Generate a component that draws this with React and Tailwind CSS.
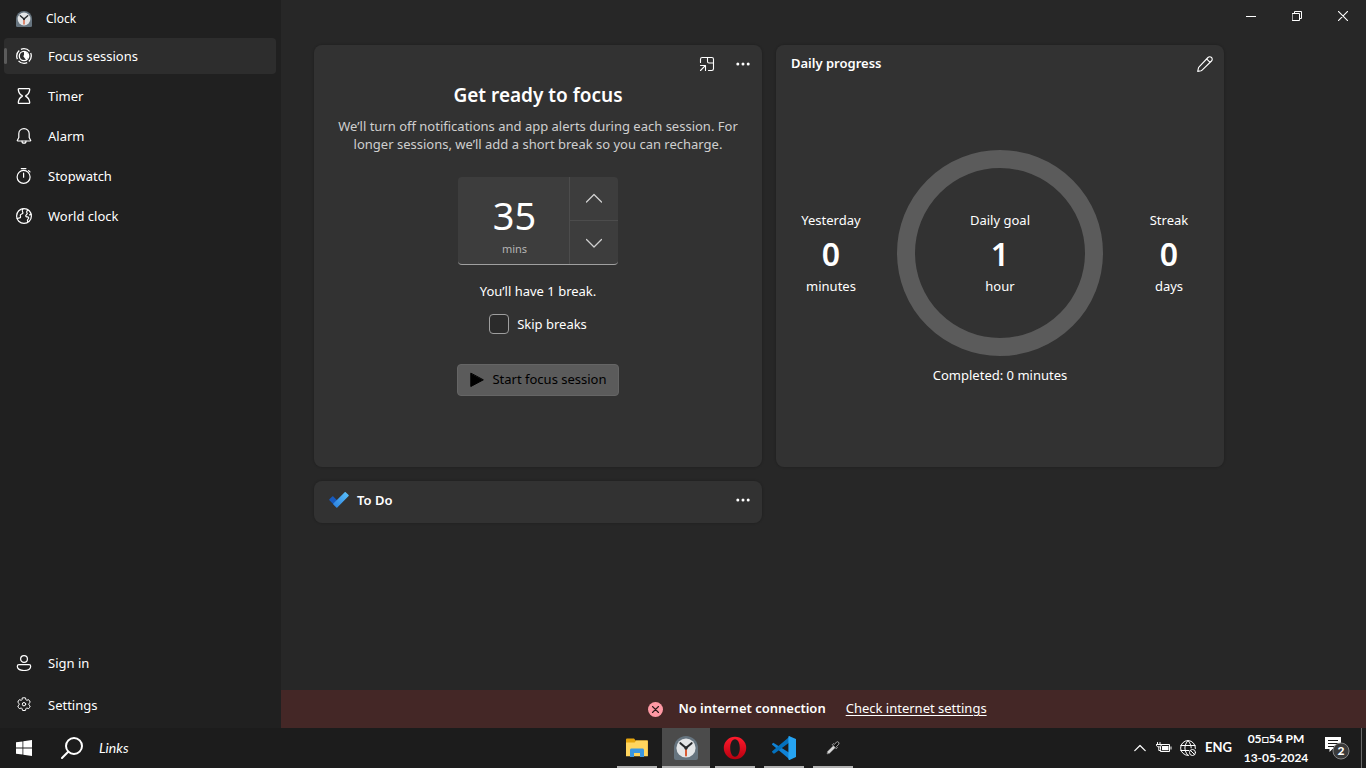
import React, { useState } from "react";

function Svg({ size = 16, box = 16, stroke = 1.1, children, className = "" }) {
  return (
    <svg
      width={size}
      height={size}
      viewBox={`0 0 ${box} ${box}`}
      fill="none"
      stroke="currentColor"
      strokeWidth={stroke}
      strokeLinecap="round"
      strokeLinejoin="round"
      aria-hidden="true"
      className={`shrink-0 ${className}`}
    >
      {children}
    </svg>
  );
}

function ClockLogo({ size }) {
  return (
    <Svg size={size} box={24} stroke={0}>
      <path d="M12 0a12 12 0 0 1 12 12v10a2 2 0 0 1-2 2H2a2 2 0 0 1-2-2V12A12 12 0 0 1 12 0z" fill="#66747f" />
      <circle cx="12" cy="12" r="9.6" fill="#e3e5e7" />
      <path d="M12 12v7.5" stroke="#d8532c" strokeWidth="1.9" />
      <path d="M6.4 7.2L12 12l5.6-4.8" stroke="#26292c" strokeWidth="2.1" />
      <circle cx="12" cy="12" r="1.7" fill="#26292c" />
    </Svg>
  );
}

const FocusIcon = () => (
  <Svg box={16} stroke={1.3}>
    <circle cx="8" cy="8" r="7.3" strokeDasharray="9.5 1.97" strokeLinecap="butt" strokeDashoffset="3.4" />
    <circle cx="8" cy="8" r="4.7" />
    <path d="M8 3.600a4.400 4.400 0 0 1 2.600 7.900L8 8z" fill="currentColor" stroke="none" />
    <path d="M8 8l2.600 3.500" />
  </Svg>
);
const TimerIcon = () => (
  <Svg stroke={1.3}>
    <path d="M3 .7h10c.5 0 .8.4.7.9-.3 3-1.500 4.900-3.900 6.100-.3.2-.3.500 0 .6 2.400 1.200 3.600 3.100 3.900 6.100 0 .5-.2.900-.7.900H3c-.5 0-.8-.4-.7-.9.3-3 1.500-4.900 3.900-6.100.3-.1.300-.4 0-.6C3.800 6.500 2.600 4.600 2.300 1.600c-.1-.5.2-.9.700-.9z" />
  </Svg>
);
const BellIcon = () => (
  <Svg stroke={1.2}>
    <path d="M8 .6c-3 0-5.200 2.300-5.200 5.200v3.600l-1.500 3c-.1.300 0 .6.400.6h12.600c.4 0 .5-.3.400-.6l-1.500-3V5.800C13.200 2.900 11 .6 8 .6z" />
    <path d="M6 13.200a2 2 0 0 0 4 0" />
  </Svg>
);
const StopwatchIcon = () => (
  <Svg stroke={1.2}>
    <circle cx="7.600" cy="8.900" r="6.500" />
    <path d="M7.600 5.200v4M5.300.6h4.600M12.600 2.600l1.400 1.300" />
  </Svg>
);
const WorldIcon = () => (
  <Svg stroke={1.2}>
    <circle cx="8" cy="8" r="7.400" />
    <path d="M1.200 10.500l2.400-.6c.8-.2 1.100-.7.900-1.400l-.2-1c-.1-.7.300-1.100.9-1.300l1-.4c.6-.2.800-.7.600-1.300L6.300 2.900c-.1-.7.100-1.300.6-1.900" />
    <path d="M11.800 1.900l-.9 1.300c-.4.600-.3 1.100.1 1.600.6.700.2 1.400-.6 1.900-.9.600-.8 1.500-.1 2 .7.400 1.700-.1 2.300.6.600.7-.2 1.500-.8 2.100-.5.600-.5 1.500-.1 2.400M15.100 6.400l-1.600.5" />
  </Svg>
);
const PersonIcon = () => (
  <Svg stroke={1.2}>
    <circle cx="8" cy="4" r="3.400" />
    <path d="M3 9.600h10c1 0 1.700.7 1.700 1.600 0 2.600-2.700 4.300-6.700 4.300s-6.700-1.700-6.700-4.300c0-.9.700-1.600 1.700-1.600z" />
  </Svg>
);
const GearIcon = () => (
  <Svg stroke={1}>
    <path d="M6.500.9c1-.2 2-.2 3 0l.4 1.700c.1.500.600.8 1.100.6l1.700-.5c.7.700 1.200 1.600 1.500 2.600l-1.300 1.200c-.4.400-.4.900 0 1.300l1.300 1.200c-.3 1-.8 1.800-1.500 2.600l-1.700-.5c-.5-.1-1 .1-1.100.6l-.4 1.700c-1 .2-2 .2-3 0l-.4-1.700c-.1-.5-.6-.8-1.100-.6l-1.700.5C2.600 10.800 2.100 10 1.800 9l1.300-1.200c.4-.4.4-.9 0-1.300L1.800 5.300c.3-1 .8-1.900 1.500-2.600L5 3.200c.5.200 1-.1 1.100-.6z" />
    <circle cx="8" cy="7.200" r="1.700" />
  </Svg>
);

function Dots() {
  return (
    <Svg size={14} box={14} stroke={0}>
      <circle cx="1.800" cy="7" r="1.500" fill="currentColor" />
      <circle cx="7" cy="7" r="1.500" fill="currentColor" />
      <circle cx="12.200" cy="7" r="1.500" fill="currentColor" />
    </Svg>
  );
}

function NavItem({ icon, label, active }) {
  return (
    <a
      href="#"
      aria-current={active ? "page" : undefined}
      className={`flex h-9 items-center rounded ${active ? "bg-[#2d2d2d]" : ""}`}
    >
      <span className={`h-4 w-[3px] rounded-full ${active ? "bg-[#5b5b5b]" : ""}`} />
      <span className="ml-[9px] mr-4">{icon}</span>
      <span className="pt-px">{label}</span>
    </a>
  );
}

function Sidebar() {
  return (
    <aside className="flex w-[281px] shrink-0 flex-col bg-[#202020] px-1">
      <div className="flex h-[38px] items-center gap-[14px] pl-3 text-xs">
        <ClockLogo size={16} />
        <span>Clock</span>
      </div>
      <nav className="mr-px flex flex-1 flex-col gap-1">
        <NavItem icon={<FocusIcon />} label="Focus sessions" active />
        <NavItem icon={<TimerIcon />} label="Timer" />
        <NavItem icon={<BellIcon />} label="Alarm" />
        <NavItem icon={<StopwatchIcon />} label="Stopwatch" />
        <NavItem icon={<WorldIcon />} label="World clock" />
      </nav>
      <nav className="mr-px flex flex-col gap-[6px] pb-[5px]">
        <NavItem icon={<PersonIcon />} label="Sign in" />
        <NavItem icon={<GearIcon />} label="Settings" />
      </nav>
    </aside>
  );
}

function WindowControls() {
  const button = "flex h-8 w-[46px] items-center justify-center";
  return (
    <div className="flex justify-end">
      <button aria-label="Minimize" className={button}>
        <Svg size={10} box={10} stroke={1}><path d="M0 5.500h10" strokeLinecap="butt" /></Svg>
      </button>
      <button aria-label="Restore" className={button}>
        <Svg size={10} box={10} stroke={1}>
          <path d="M.5 2.500h7v7h-7zM2.500 2.500v-2h7v7h-2" strokeLinejoin="miter" />
        </Svg>
      </button>
      <button aria-label="Close" className={button}>
        <Svg size={10} box={10} stroke={1.1}><path d="M.3.3l9.400 9.400M9.700.3L.3 9.700" /></Svg>
      </button>
    </div>
  );
}

const card = "rounded-lg bg-[#323232] shadow-[0_0_2px_1px_rgba(0,0,0,0.12)]";

function FocusCard() {
  const [minutes, setMinutes] = useState(35);
  return (
    <section className={`${card} flex min-h-[422px] flex-col items-center`}>
      <div className="flex h-[38px] w-full items-center justify-end gap-5 pr-[11px]">
        <button aria-label="Keep on top">
          <Svg box={16} stroke={1.1}>
            <path d="M1.500 6.500V3.200C1.500 2 2.300 1.500 3.200 1.500h9.600c1 0 1.700.7 1.700 1.700v9.600c0 1-.7 1.700-1.700 1.700H9.500" />
            <path d="M8.500 1.500v4c0 1 .5 1.500 1.500 1.500h4.500M1.500 9.500h5v5M6.300 9.700l-4.800 4.800" />
          </Svg>
        </button>
        <button aria-label="More options" className="px-px"><Dots /></button>
      </div>
      <h1 className="text-[19px] font-semibold leading-6">Get ready to focus</h1>
      <p className="mt-[10px] max-w-[416px] text-center leading-[18px] text-[#cfcfcf]">
        We’ll turn off notifications and app alerts during each session. For longer sessions, we’ll
        add a short break so you can recharge.
      </p>
      <div className="mt-6 flex h-[88px] w-40 overflow-hidden rounded border-b border-[#a0a0a0] bg-[#3d3d3d]">
        <div className="flex flex-1 flex-col items-center pt-[14px]">
          <input
            id="minutes"
            value={minutes}
            onChange={(e) => setMinutes(Number(e.target.value) || 0)}
            className="h-12 w-full bg-transparent pl-0.5 text-center text-[38px] leading-[48px] outline-none"
          />
          <label htmlFor="minutes" className="pt-0.5 pl-0.5 text-[11px] leading-4 text-[#b4b4b4]">mins</label>
        </div>
        <div className="flex w-[49px] flex-col border-l border-[#4c4c4c] text-[#d0d0d0]">
          <button
            aria-label="Increase"
            onClick={() => setMinutes(minutes + 5)}
            className="flex flex-1 items-center justify-center border-b border-[#4c4c4c]"
          >
            <Svg stroke={1.3}><path d="M.5 11L8 3.500l7.500 7.500" /></Svg>
          </button>
          <button
            aria-label="Decrease"
            onClick={() => setMinutes(Math.max(5, minutes - 5))}
            className="flex flex-1 items-center justify-center"
          >
            <Svg stroke={1.3}><path d="M.5 4.500L8 12l7.500-7.500" /></Svg>
          </button>
        </div>
      </div>
      <p className="mt-4 leading-5">You’ll have 1 break.</p>
      <label className="mt-[13px] flex items-center gap-2 leading-5">
        <input
          type="checkbox"
          className="h-5 w-5 appearance-none rounded border border-[#9e9e9e] bg-[#2b2b2b] checked:bg-[#8a8a8a]"
        />
        Skip breaks
      </label>
      <button className="mt-[30px] flex h-8 items-center gap-[7px] rounded border border-[#656565] bg-[#5b5b5b] px-[11px] text-black">
        <Svg stroke={1}><path d="M1.800 1.500v13L14 8z" fill="currentColor" /></Svg>
        Start focus session
      </button>
    </section>
  );
}

function Stat({ label, value, unit }) {
  return (
    <div className="flex flex-col items-center leading-5">
      <span>{label}</span>
      <span className="mt-1 mb-0.5 text-[32px] font-semibold leading-10">{value}</span>
      <span>{unit}</span>
    </div>
  );
}

function ProgressCard() {
  return (
    <section className={`${card} flex min-h-[422px] flex-col`}>
      <div className="flex h-[38px] items-center justify-between pl-[15px] pr-[11px]">
        <h2 className="font-semibold">Daily progress</h2>
        <button aria-label="Edit daily goal">
          <Svg stroke={1.1}>
            <path d="M11 1.500a2.450 2.450 0 0 1 3.500 3.500L5.100 14.100c-.3.300-.6.500-1 .6L.7 15.400l.8-3.500c.1-.4.300-.7.600-1zM9.600 2.900l3.500 3.500" />
          </Svg>
        </button>
      </div>
      <div className="mt-[67px] grid grid-cols-[110px_1fr_110px] items-center">
        <Stat label="Yesterday" value="0" unit="minutes" />
        <div className="flex h-[206px] w-[206px] items-center justify-center justify-self-center rounded-full border-[18px] border-[#5b5b5b]">
          <Stat label="Daily goal" value="1" unit="hour" />
        </div>
        <Stat label="Streak" value="0" unit="days" />
      </div>
      <p className="mt-[9px] text-center leading-5">Completed: 0 minutes</p>
    </section>
  );
}

function TodoCard() {
  return (
    <section className={`${card} flex h-[42px] items-center pb-1 pl-[15px] pr-[11px]`}>
      <svg width="20" height="18" viewBox="0 0 20 18" aria-hidden="true">
        <defs>
          <linearGradient id="tick" x1="0" y1="1" x2="1" y2="0">
            <stop offset="0" stopColor="#2a7fe0" />
            <stop offset="1" stopColor="#5cc3fb" />
          </linearGradient>
        </defs>
        <path d="M.4 8.300l2.900-2.900c.3-.3.700-.3 1 0l6 6-3.900 3.900-6-6c-.3-.3-.3-.7 0-1z" fill="#185abd" />
        <path d="M4.400 12.400L15.700 1.200c.3-.3.700-.3 1 0l2.900 2.900c.3.300.3.700 0 1L8.300 16.400c-.3.300-.7.300-1 0l-2.900-3c-.3-.3-.3-.7 0-1z" fill="url(#tick)" />
      </svg>
      <h2 className="ml-2 flex-1 pt-0.5 font-semibold">To Do</h2>
      <button aria-label="More options" className="px-px"><Dots /></button>
    </section>
  );
}

function ConnectionBar() {
  return (
    <div className="flex h-[38px] items-center justify-center bg-[#442726] pr-3">
      <Svg size={15} box={15} stroke={1.1}>
        <circle cx="7.500" cy="7.500" r="7.500" fill="#ff99a4" stroke="none" />
        <path d="M4.500 4.500l6 6M10.500 4.500l-6 6" stroke="#2b1a1a" />
      </Svg>
      <strong className="ml-[15px] font-semibold">No internet connection</strong>
      <a href="#" className="ml-5 underline underline-offset-2">Check internet settings</a>
    </div>
  );
}

function TaskButton({ label, active, children }) {
  return (
    <button
      aria-label={label}
      className={`flex h-10 w-12 flex-col items-center ${active ? "bg-[#4b4b4b]" : ""}`}
    >
      <span className="flex flex-1 items-center pt-0.5">{children}</span>
      <span className={`h-0.5 bg-[#b3b3b3] ${active ? "w-12" : "w-10"}`} />
    </button>
  );
}

function Taskbar() {
  return (
    <footer className="flex h-10 shrink-0 items-center bg-[#1c1c1c] font-['Lato','DejaVu_Sans',sans-serif]">
      <div className="flex w-[613px] items-center pl-4">
        <button aria-label="Start">
          <svg width="16" height="16" viewBox="0 0 16 16" fill="#fff" aria-hidden="true">
            <path d="M0 2.300L6.500 1.400v6.200H0zM7.300 1.300L16 0v7.600H7.300zM0 8.400h6.500v6.200L0 13.700zM7.300 8.400H16V16l-8.700-1.300z" />
          </svg>
        </button>
        <button aria-label="Search" className="ml-[29px]">
          <Svg size={22} box={22} stroke={2}>
            <circle cx="13" cy="9" r="8" />
            <path d="M7.200 14.800L1 21" />
          </Svg>
        </button>
        <span className="ml-4 text-sm italic">Links</span>
      </div>
      <div className="flex gap-px">
        <TaskButton label="File Explorer">
          <svg width="22" height="20" viewBox="0 0 22 20" aria-hidden="true">
            <path d="M0 1.500C0 .9.400.6 1 .6h7l1.700 1.800H21c.5 0 .8.300.8.800V18H0z" fill="#e5a50e" />
            <path d="M0 4.600h8.600L10.200 2.400H21.800V18.300H0z" fill="#ffd55e" />
            <path d="M4 12c0-1 .6-1.600 1.600-1.600h10.800c1 0 1.600.6 1.600 1.600v7h-4v-4H8v4H4z" fill="#3b97e0" />
          </svg>
        </TaskButton>
        <TaskButton label="Clock" active><ClockLogo size={24} /></TaskButton>
        <TaskButton label="Opera">
          <svg width="24" height="24" viewBox="0 0 24 24" aria-hidden="true">
            <defs>
              <linearGradient id="opera" x1="0" y1="0" x2="0" y2="1">
                <stop offset="0" stopColor="#ff1b2d" />
                <stop offset="1" stopColor="#b8000f" />
              </linearGradient>
            </defs>
            <path fillRule="evenodd" fill="url(#opera)" d="M12 .8a11.200 11.200 0 1 1 0 22.400A11.200 11.200 0 0 1 12 .8zm0 2.500c-3 0-4.800 4-4.800 8.700s1.800 8.700 4.800 8.700 4.800-4 4.800-8.700-1.800-8.700-4.800-8.700z" />
          </svg>
        </TaskButton>
        <TaskButton label="Visual Studio Code">
          <svg width="24" height="24" viewBox="0 0 24 24" aria-hidden="true">
            <path d="M1.300 6.700L.2 7.800c-.3.300-.3.700 0 1L17.700 23.600V17z" fill="#1083d6" />
            <path d="M.2 15.200c-.3.300-.3.700 0 1l1.300 1.200c.3.300.7.300 1 .1L18 6V.3z" fill="#0471bd" />
            <path d="M17.500.200L24 3v18l-6.500 2.900c-.8.300-1.100-.2-1.100-.8V.9c0-.6.500-1 1.100-.7z" fill="#26a4f2" />
          </svg>
        </TaskButton>
        <TaskButton label="Color picker">
          <svg width="14" height="14" viewBox="0 0 14 14" aria-hidden="true">
            <path d="M1 13l.6-2.700L7.500 4.500l2 2-5.900 5.800z" fill="#d8d8d8" stroke="#777" strokeWidth=".7" />
            <path d="M6.300 3.700l1.200-1 .9.700L10.600 1c1-1 3.200.7 2.200 2.100l-2.300 2.400.7 1-1 1.200z" fill="#101010" stroke="#c8c8c8" strokeWidth=".8" />
          </svg>
        </TaskButton>
      </div>
      <div className="flex flex-1 items-center justify-end">
        <button aria-label="Show hidden icons">
          <Svg size={12} box={12} stroke={1.200}><path d="M.8 8.700L6 3.500l5.200 5.200" /></Svg>
        </button>
        <Svg size={16} box={16} stroke={1} className="ml-[10px]">
          <path d="M4.500 4.500h9v7h-9zM15 6.500v3" strokeLinecap="butt" />
          <path d="M6 6h6.500v4.200H6z" fill="currentColor" stroke="none" />
          <path d="M.5 4.500h4.600v1.500c0 1.200-4.600 1.200-4.600 0zM1.500 4.500v-2M4 4.500v-2M2.800 7v3.500h2" fill="#1c1c1c" />
        </Svg>
        <Svg size={16} box={16} stroke={1} className="ml-2">
          <path d="M8.500 15.400A7.400 7.400 0 1 1 15.400 8.500M.8 5.500h14.300M.8 10.500h8M8 .6C3.800 5 3.800 11 8 15.400M8 .6c2.100 2.200 3.100 4.700 3.200 7.300" />
          <circle cx="12.500" cy="12.500" r="3" />
          <path d="M10.500 10.500l4 4" />
        </Svg>
        <span className="ml-[9px] text-[13px] font-bold">ENG</span>
        <time className="ml-3 flex w-[64px] flex-col items-center whitespace-nowrap text-xs font-bold leading-[19px]">
          <span>05□54 PM</span>
          <span>13-05-2024</span>
        </time>
        <button aria-label="2 notifications" className="ml-[17px] mr-[11px]">
          <svg width="25" height="24" viewBox="0 0 25 24" aria-hidden="true">
            <path d="M0 1h16v12H7.500L4.500 16v-3H0z" fill="#fff" />
            <path d="M3 4.500h10M3 7.500h10M3 10.500h6" stroke="#1c1c1c" strokeWidth="1" />
            <circle cx="16" cy="15" r="8" fill="#3a3a3a" stroke="#858585" />
            <text x="16" y="19" textAnchor="middle" fontSize="12" fontWeight="900" fill="#fff">2</text>
          </svg>
        </button>
        <span className="mr-1 h-10 w-px bg-[#6a6a6a]" />
      </div>
    </footer>
  );
}

export default function App() {
  return (
    <div className="flex min-h-screen flex-col bg-[#272727] font-['Noto_Sans','Open_Sans',sans-serif] text-[13px] text-white">
      <div className="flex flex-1">
        <Sidebar />
        <div className="flex min-w-0 flex-1 flex-col">
          <WindowControls />
          <main className="flex-1 px-[33px] pt-[13px]">
            <div className="grid grid-cols-[repeat(auto-fill,448px)] gap-[14px]">
              <FocusCard />
              <ProgressCard />
              <TodoCard />
            </div>
          </main>
          <ConnectionBar />
        </div>
      </div>
      <Taskbar />
    </div>
  );
}
